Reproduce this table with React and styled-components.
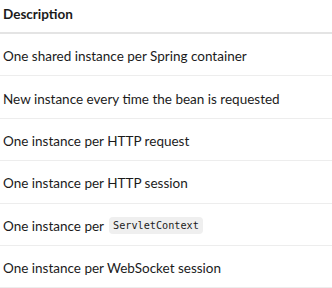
import React from 'react';
import styled, { createGlobalStyle } from 'styled-components';

const GlobalStyle = createGlobalStyle`
  body {
    margin: 0;
    background: #ffffff;
    font-family: Lato, "Noto Sans", sans-serif;
    color: #1b1b1b;
  }
  * { box-sizing: border-box; }
`;

const Table = styled.div`
  display: flex;
  flex-direction: column;
  font-size: 13.5px;
`;

const HeadCell = styled.div`
  display: flex;
  align-items: center;
  font-weight: 700;
  height: 34px;
  padding: 0 3px 4px;
  border-bottom: 2px solid #e4e4e4;
`;

const Cell = styled.div`
  display: flex;
  align-items: center;
  height: 42.4px;
  padding: 3px 3px 0;
  border-bottom: 1px solid #ededed;
`;

const Code = styled.code`
  font-family: "DejaVu Sans Mono", "Liberation Mono", monospace;
  font-size: 10.2px;
  line-height: 17px;
  background: #efefef;
  border-radius: 4px;
  padding: 0 4px;
  margin-left: 5px;
`;

const rows = [
  'One shared instance per Spring container',
  'New instance every time the bean is requested',
  'One instance per HTTP request',
  'One instance per HTTP session',
  <>One instance per<Code>ServletContext</Code></>,
  'One instance per WebSocket session',
];

export default function App() {
  return (
    <>
      <GlobalStyle />
      <Table>
        <HeadCell>Description</HeadCell>
        {rows.map((r, i) => (
          <Cell key={i}>{r}</Cell>
        ))}
      </Table>
    </>
  );
}
